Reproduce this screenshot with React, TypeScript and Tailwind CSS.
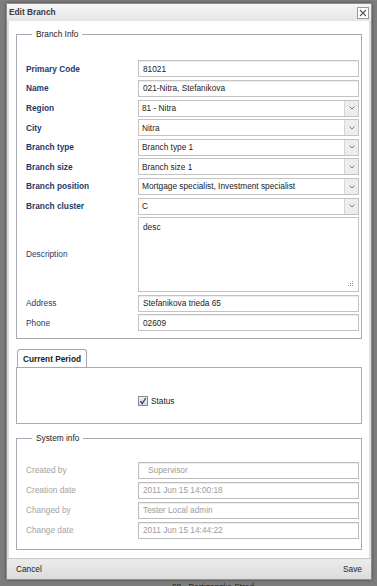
import type { ReactNode } from 'react';

const font = { fontFamily: '"Liberation Sans", Arial, sans-serif' };

function TextBox({ value, muted, indent }: { value: string; muted?: boolean; indent?: boolean }) {
  return (
    <div
      className={`flex h-[17px] items-center border text-[8.3px] leading-none shadow-[inset_0_1px_1px_rgba(0,0,0,0.08)] ${
        indent ? 'pl-[9px]' : 'pl-[4px]'
      } ${muted ? 'border-[#bdbdbd] bg-white text-[#9c9c9c]' : 'border-[#c3c3c3] bg-white text-[#222]'}`}
    >
      {value}
    </div>
  );
}

function SelectBox({ value }: { value: string }) {
  return (
    <div className="flex h-[17px] items-stretch border border-[#c3c3c3] bg-white text-[8.3px] leading-none text-[#222]">
      <span className="flex flex-1 items-center whitespace-nowrap px-[3px]">{value}</span>
      <span className="flex w-[14px] items-center justify-center border-l border-[#d6d6d6] bg-[#ededed]">
        <svg width="6" height="4" viewBox="0 0 6 4">
          <path d="M0.5 0.5 L3 3 L5.5 0.5" fill="none" stroke="#7a7a7a" strokeWidth="1" />
        </svg>
      </span>
    </div>
  );
}

function Row({ label, bold, muted, children }: { label: string; bold?: boolean; muted?: boolean; children: ReactNode }) {
  return (
    <>
      <div
        className={`flex items-center text-[8.3px] ${bold ? 'font-bold' : ''} ${muted ? 'text-[#a3a3a3]' : 'text-[#1d3a6c]'}`}
      >
        {label}
      </div>
      <div>{children}</div>
    </>
  );
}

export default function App() {
  return (
    <div className="relative h-[586px] w-[377px] overflow-hidden bg-[#7d7d7d]" style={font}>
      {/* page text behind the dialog */}
      <div className="absolute left-[172px] top-[581px] text-[8.3px] text-[#2a2a2a]">68 - Partizanske Stred</div>

      <div className="relative ml-[6px] mt-[3px] w-[366px] border border-[#8e8e8e] bg-[#dedede] shadow-[0_0_3px_rgba(0,0,0,0.4)]">
        {/* title */}
        <div className="flex h-[17px] items-center justify-between bg-gradient-to-b from-[#f6f6f6] to-[#e6e6e6] pl-[2px] pr-[2px]">
          <span className="text-[8.3px] font-bold text-[#3a3a3a]">Edit Branch</span>
          <span className="flex h-[12px] w-[12px] items-center justify-center border border-[#9a9a9a] bg-white">
            <svg width="8" height="8" viewBox="0 0 8 8">
              <path d="M1 1 L7 7 M7 1 L1 7" stroke="#555" strokeWidth="1.1" />
            </svg>
          </span>
        </div>

        {/* body */}
        <div className="mx-[2px] bg-white px-[7px] pb-[8px] pt-[7px]">
          <fieldset className="border border-[#a9a9b3] pb-[7px] pl-[9px] pr-[2px]">
            <legend className="ml-[6px] px-[4px] text-[8.3px] text-[#222]">Branch Info</legend>
            <div className="mt-[20px] grid grid-cols-[112px_1fr] gap-y-[2.6px]">
              <Row label="Primary Code" bold>
                <TextBox value="81021" />
              </Row>
              <Row label="Name" bold>
                <TextBox value="021-Nitra, Stefanikova" />
              </Row>
              <Row label="Region" bold>
                <SelectBox value="81 - Nitra" />
              </Row>
              <Row label="City" bold>
                <SelectBox value="Nitra" />
              </Row>
              <Row label="Branch type" bold>
                <SelectBox value="Branch type 1" />
              </Row>
              <Row label="Branch size" bold>
                <SelectBox value="Branch size 1" />
              </Row>
              <Row label="Branch position" bold>
                <SelectBox value="Mortgage specialist, Investment specialist" />
              </Row>
              <Row label="Branch cluster" bold>
                <SelectBox value="C" />
              </Row>
              <Row label="Description">
                <div className="relative h-[75px] border border-[#c3c3c3] px-[4px] py-[3px] text-[8.3px] text-[#222]">
                  desc
                  <svg className="absolute bottom-[4px] right-[4px]" width="6" height="6" viewBox="0 0 6 6">
                    <rect x="4" y="0" width="1" height="1" fill="#999" />
                    <rect x="2" y="2" width="1" height="1" fill="#999" />
                    <rect x="4" y="2" width="1" height="1" fill="#999" />
                    <rect x="0" y="4" width="1" height="1" fill="#999" />
                    <rect x="2" y="4" width="1" height="1" fill="#999" />
                    <rect x="4" y="4" width="1" height="1" fill="#999" />
                  </svg>
                </div>
              </Row>
              <Row label="Address">
                <TextBox value="Stefanikova trieda 65" />
              </Row>
              <Row label="Phone">
                <TextBox value="02609" />
              </Row>
            </div>
          </fieldset>

          {/* current period tab */}
          <div className="mt-[10px]">
            <div className="ml-[1px] flex h-[18px] w-[70px] items-center justify-center rounded-t-[3px] border border-b-0 border-[#a9a9b3] bg-white text-[8.3px] font-bold text-[#222]">
              Current Period
            </div>
            <div className="flex h-[57px] items-center border border-[#a9a9b3] pl-[121px] pt-[11px]">
              <span className="flex h-[10px] w-[10px] items-center justify-center border border-[#8c8c8c] bg-gradient-to-b from-[#f2f2f2] to-[#d6d6d6]">
                <svg width="8" height="8" viewBox="0 0 8 8">
                  <path d="M1.5 4.2 L3.2 6.5 L6.8 1" fill="none" stroke="#2d3f8c" strokeWidth="1.3" />
                </svg>
              </span>
              <span className="ml-[3px] text-[8.3px] text-[#222]">Status</span>
            </div>
          </div>

          <fieldset className="mt-[8px] border border-[#a9a9b3] pb-[10px] pl-[9px] pr-[2px]">
            <legend className="ml-[6px] px-[4px] text-[8.3px] text-[#222]">System info</legend>
            <div className="mt-[17px] grid grid-cols-[112px_1fr] gap-y-[3.1px]">
              <Row label="Created by" muted>
                <TextBox value="Supervisor" muted indent />
              </Row>
              <Row label="Creation date" muted>
                <TextBox value="2011 Jun 15 14:00:18" muted />
              </Row>
              <Row label="Changed by" muted>
                <TextBox value="Tester Local admin" muted />
              </Row>
              <Row label="Change date" muted>
                <TextBox value="2011 Jun 15 14:44:22" muted />
              </Row>
            </div>
          </fieldset>
        </div>

        {/* footer */}
        <div className="flex h-[21px] items-center justify-between border-t border-[#c8c8c8] bg-gradient-to-b from-[#ececec] to-[#dcdcdc] px-[9px] text-[8.3px] text-[#222]">
          <span>Cancel</span>
          <span>Save</span>
        </div>
      </div>
    </div>
  );
}
